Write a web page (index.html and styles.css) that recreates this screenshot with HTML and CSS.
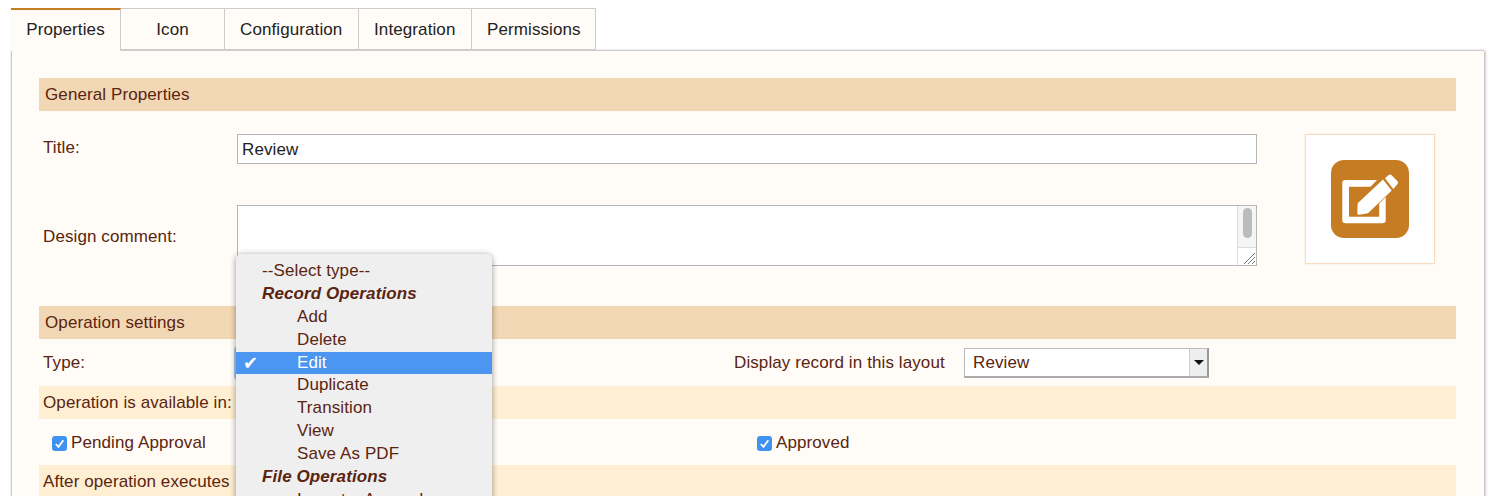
FILE: index.html
```html
<!DOCTYPE html>
<html lang="en">
<head>
    <meta charset="UTF-8">
    <meta name="viewport" content="width=device-width, initial-scale=1.0">
    <title>Operation Properties</title>
    <link rel="stylesheet" href="styles.css">
</head>
<body>
    <div class="tabs">
        <div class="tab active">Properties</div>
        <div class="tab tab-icon">Icon</div>
        <div class="tab tab-config">Configuration</div>
        <div class="tab tab-integ">Integration</div>
        <div class="tab tab-perms">Permissions</div>
    </div>

    <div class="panel">
        <div class="section-head">General Properties</div>

        <div class="general">
            <div class="general-fields">
                <div class="field-row title-row">
                    <label class="field-label">Title:</label>
                    <div class="text-input">Review</div>
                </div>
                <div class="field-row comment-row">
                    <label class="field-label">Design comment:</label>
                    <div class="textarea">
                        <div class="scrollbar">
                            <div class="scroll-thumb"></div>
                            <div class="resize-grip">
                                <svg width="14" height="14" viewBox="0 0 14 14">
                                    <path d="M2 13L13 2M6 13L13 6M10 13L13 10" stroke="#777" stroke-width="1" fill="none"/>
                                </svg>
                            </div>
                        </div>
                    </div>
                </div>
            </div>
            <div class="icon-box">
                <div class="icon-tile">
                    <svg width="78" height="78" viewBox="0 0 78 78">
                        <path d="M46 20H14.500a3.200 3.200 0 0 0-3.200 3.200V60a3.200 3.200 0 0 0 3.200 3.200H51.500a3.200 3.200 0 0 0 3.200-3.200V37l-6.500 6.500V56.700H18V26.700H39.500z" fill="#fff"/>
                        <path d="M26.700 43.300L52 19.500L60.700 30.500L37 53.300L28 54.800Q26.200 55 26.300 53z" fill="#fff"/>
                        <path d="M54 18.300L57.500 15Q59 13.800 60.500 15L66.500 21.300Q67.800 22.700 66.500 24L62.300 29z" fill="#fff"/>
                    </svg>
                </div>
            </div>
        </div>

        <div class="section-head">Operation settings</div>
        <div class="type-row">
            <label class="field-label">Type:</label>
            <div class="type-cell">
                <div class="type-select"></div>
                <div class="dropdown">
                    <div class="opt">--Select type--</div>
                    <div class="opt group">Record Operations</div>
                    <div class="opt child">Add</div>
                    <div class="opt child">Delete</div>
                    <div class="opt child selected"><span class="tick">✔</span>Edit</div>
                    <div class="opt child">Duplicate</div>
                    <div class="opt child">Transition</div>
                    <div class="opt child">View</div>
                    <div class="opt child">Save As PDF</div>
                    <div class="opt group">File Operations</div>
                    <div class="opt child">Import a Append</div>
                </div>
            </div>
            <div class="layout-cell">
                <label>Display record in this layout</label>
                <div class="layout-select">
                    <span class="layout-value">Review</span>
                    <span class="select-btn"><span class="caret"></span></span>
                </div>
            </div>
        </div>

        <div class="sub-head">Operation is available in:</div>
        <div class="check-row">
            <div class="check-cell">
                <span class="check">
                    <svg width="15" height="15" viewBox="0 0 15 15"><path d="M3.800 8L6.500 10.800l4.800-6.500" stroke="#fff" stroke-width="1.800" fill="none"/></svg>
                </span>
                Pending Approval
            </div>
            <div class="check-cell check-right">
                <span class="check">
                    <svg width="15" height="15" viewBox="0 0 15 15"><path d="M3.800 8L6.500 10.800l4.800-6.500" stroke="#fff" stroke-width="1.800" fill="none"/></svg>
                </span>
                Approved
            </div>
        </div>
        <div class="sub-head">After operation executes</div>
    </div>
</body>
</html>
```

FILE: styles.css
```css
html, body {
    height: 496px;
    overflow: hidden;
}
body {
    margin: 0;
    padding: 8px 16px 0 11px;
    background: #fff;
    font-family: "Liberation Sans", Arial, sans-serif;
    font-size: 17px;
    letter-spacing: 0.1px;
    color: #5a2410;
}
.tabs {
    display: flex;
    height: 42px;
    position: relative;
    z-index: 1;
}
.tab {
    padding: 0 15px;
    line-height: 41px;
    background: #fffbf6;
    border: 1px solid #ccc;
    border-left: none;
    color: #222;
}
.tab.active {
    width: 110px;
    box-sizing: border-box;
    padding: 0;
    text-align: center;
    border-top: 2px solid #c67c22;
    border-bottom: none;
    line-height: 40px;
    height: 43px;
}
.tab-icon {
    width: 104px;
    box-sizing: border-box;
    padding: 0;
    text-align: center;
}
.tab-config {
    width: 134px;
    box-sizing: border-box;
}
.tab-integ {
    width: 113px;
    box-sizing: border-box;
}
.tab-perms {
    width: 124px;
    box-sizing: border-box;
}
.panel {
    height: 500px;
    background: #fffbf6;
    border-left: 1px solid #ccc;
    border-top: 1px solid #ccc;
    box-shadow: 1px 1px 3px rgba(0,0,0,0.35);
    padding: 27px 28px 0 27px;
    box-sizing: border-box;
}
.section-head {
    height: 33px;
    line-height: 33px;
    padding-left: 6px;
    background: #f2d7b4;
}
.general {
    display: flex;
    padding-top: 23px;
    height: 195px;
    box-sizing: border-box;
}
.general-fields {
    width: 1218px;
}
.field-row {
    display: flex;
}
.field-label {
    display: block;
    width: 198px;
    padding-left: 4px;
    box-sizing: border-box;
}
.title-row {
    height: 71px;
}
.title-row .field-label {
    padding-top: 4px;
}
.comment-row .field-label {
    padding-top: 22px;
}
.text-input {
    width: 1020px;
    height: 30px;
    box-sizing: border-box;
    border: 1px solid #b5b5b5;
    background: #fff;
    padding-left: 4px;
    line-height: 29px;
    color: #222;
}
.textarea {
    width: 1020px;
    height: 61px;
    box-sizing: border-box;
    border: 1px solid #b5b5b5;
    background: #fff;
    display: flex;
    justify-content: flex-end;
}
.scrollbar {
    width: 18px;
    background: #f5f5f5;
    border-left: 1px solid #ddd;
    display: flex;
    flex-direction: column;
    justify-content: space-between;
}
.scroll-thumb {
    width: 9px;
    height: 30px;
    margin: 2px 0 0 5px;
    border-radius: 5px;
    background: #bcbcbc;
}
.resize-grip {
    height: 17px;
    border-top: 1px solid #ddd;
    background: #fff;
    display: flex;
    justify-content: flex-end;
    align-items: flex-end;
}
.icon-box {
    width: 130px;
    height: 130px;
    box-sizing: border-box;
    margin-left: 48px;
    background: #fff;
    border: 1px solid #f9dcc0;
    box-shadow: 0 0 1px #f9d9b8;
    display: flex;
    align-items: center;
    justify-content: center;
}
.icon-tile {
    width: 78px;
    height: 78px;
    border-radius: 13px;
    background: #c67c22;
}
.icon-tile svg {
    display: block;
}
.type-row {
    display: flex;
    height: 47px;
    box-sizing: border-box;
    padding-top: 1px;
    align-items: center;
}
.type-cell {
    position: relative;
    width: 497px;
    align-self: stretch;
}
.type-select {
    position: absolute;
    left: -3px;
    top: 6px;
    width: 20px;
    height: 34px;
    border-radius: 4px;
    background: #a9c6e8;
}
.dropdown {
    position: absolute;
    left: -1px;
    top: -86px;
    width: 256px;
    height: 260px;
    overflow: hidden;
    box-sizing: border-box;
    padding-top: 6px;
    background: #efefef;
    border-radius: 5px;
    box-shadow: 0 1px 6px rgba(0,0,0,0.4);
    z-index: 2;
}
.opt {
    height: 22.9px;
    line-height: 22.9px;
    padding-left: 26px;
    white-space: nowrap;
}
.group {
    font-weight: bold;
    font-style: italic;
}
.child {
    padding-left: 61px;
    position: relative;
}
.selected {
    background: #4a96f0;
    color: #fff;
}
.tick {
    position: absolute;
    left: 7px;
    top: 0;
    font-family: "DejaVu Sans", sans-serif;
    font-size: 18px;
}
.layout-cell {
    display: flex;
    align-items: center;
}
.layout-cell label {
    width: 230px;
}
.layout-select {
    width: 245px;
    height: 30px;
    box-sizing: border-box;
    display: flex;
    justify-content: space-between;
    background: #fff;
    border: 1px solid #bbb;
    border-right: 2px solid #999;
    border-bottom: 2px solid #aaa;
}
.layout-value {
    padding-left: 8px;
    line-height: 28px;
}
.select-btn {
    width: 17px;
    background: #eee;
    border-left: 1px solid #ccc;
    display: flex;
    align-items: center;
    justify-content: center;
}
.caret {
    border: 5px solid transparent;
    border-top: 5px solid #111;
    border-bottom: none;
}
.sub-head {
    height: 33px;
    line-height: 34px;
    padding-left: 4px;
    background: #feefd3;
}
.check-row {
    display: flex;
    height: 46px;
    box-sizing: border-box;
    padding-top: 2px;
    align-items: center;
    position: relative;
}
.check-cell {
    display: flex;
    align-items: center;
    gap: 4px;
    padding-left: 13px;
}
.check-right {
    position: absolute;
    left: 705px;
}
.check {
    width: 15px;
    height: 15px;
    border-radius: 3px;
    background: #3f92f0;
    display: flex;
}
```
